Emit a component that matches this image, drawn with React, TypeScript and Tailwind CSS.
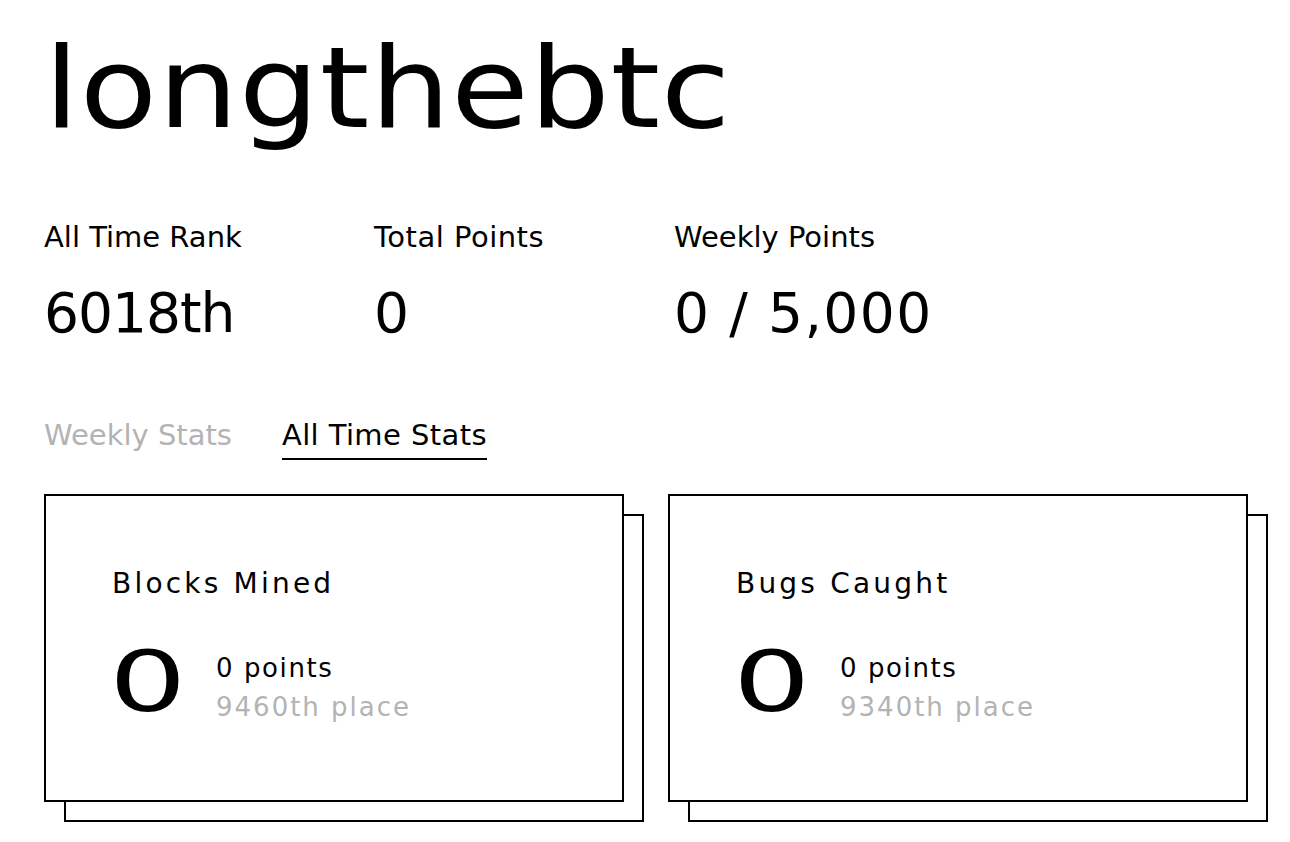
import React from "react";

function StatCard({ title, points, place }: { title: string; points: string; place: string }) {
  return (
    <div className="relative w-[600px] h-[328px]">
      <div className="absolute left-[20px] top-[20px] w-[580px] h-[308px] border-2 border-black bg-white" />
      <div className="absolute left-0 top-0 w-[580px] h-[308px] border-2 border-black bg-white pl-[66px] pt-[70px]">
        <div className="text-[28px] leading-[36px] tracking-[3.2px] text-black">{title}</div>
        <div className="flex items-start mt-[40px]">
          <div className="w-[104px] h-[80px]">
            <span className="inline-block -ml-[3px] origin-left scale-x-[1.45] text-[84px] leading-[80px] text-black">0</span>
          </div>
          <div className="flex flex-col pt-[6px]">
            <div className="text-[26px] leading-[40px] tracking-[1.6px] text-black">{points}</div>
            <div className="text-[26px] leading-[38px] tracking-[2px] text-[#b3b3b3]">{place}</div>
          </div>
        </div>
      </div>
    </div>
  );
}

export default function App() {
  return (
    <div
      className="w-[1290px] h-[842px] bg-white text-black overflow-hidden pl-[44px]"
      style={{ fontFamily: "'DejaVu Sans', 'Noto Sans', sans-serif" }}
    >
      <h1 className="text-[113px] leading-[120px] pt-[28px] font-normal">
        <span className="inline-block origin-left scale-x-[1.12] tracking-[0.6px]">longthebtc</span>
      </h1>
      <div className="flex mt-[71px]">
        <div className="w-[330px]">
          <div className="text-[29px] leading-[36px]">All Time Rank</div>
          <div className="text-[55px] leading-[64px] mt-[26px] tracking-[-1px]">6018th</div>
        </div>
        <div className="w-[300px]">
          <div className="text-[29px] leading-[36px] tracking-[0.5px]">Total Points</div>
          <div className="text-[55px] leading-[64px] mt-[26px]">0</div>
        </div>
        <div>
          <div className="text-[29px] leading-[36px]">Weekly Points</div>
          <div className="text-[55px] leading-[64px] mt-[26px] tracking-[1.4px]">0 / 5,000</div>
        </div>
      </div>
      <div className="flex gap-[50px] mt-[72px]">
        <div className="text-[29px] leading-[36px] text-[#b3b3b3] pb-[5px]">Weekly Stats</div>
        <div className="text-[29px] leading-[36px] tracking-[0.4px] text-black pb-[5px] border-b-2 border-black">All Time Stats</div>
      </div>
      <div className="flex gap-[24px] mt-[34px]">
        <StatCard title="Blocks Mined" points="0 points" place="9460th place" />
        <StatCard title="Bugs Caught" points="0 points" place="9340th place" />
      </div>
    </div>
  );
}
